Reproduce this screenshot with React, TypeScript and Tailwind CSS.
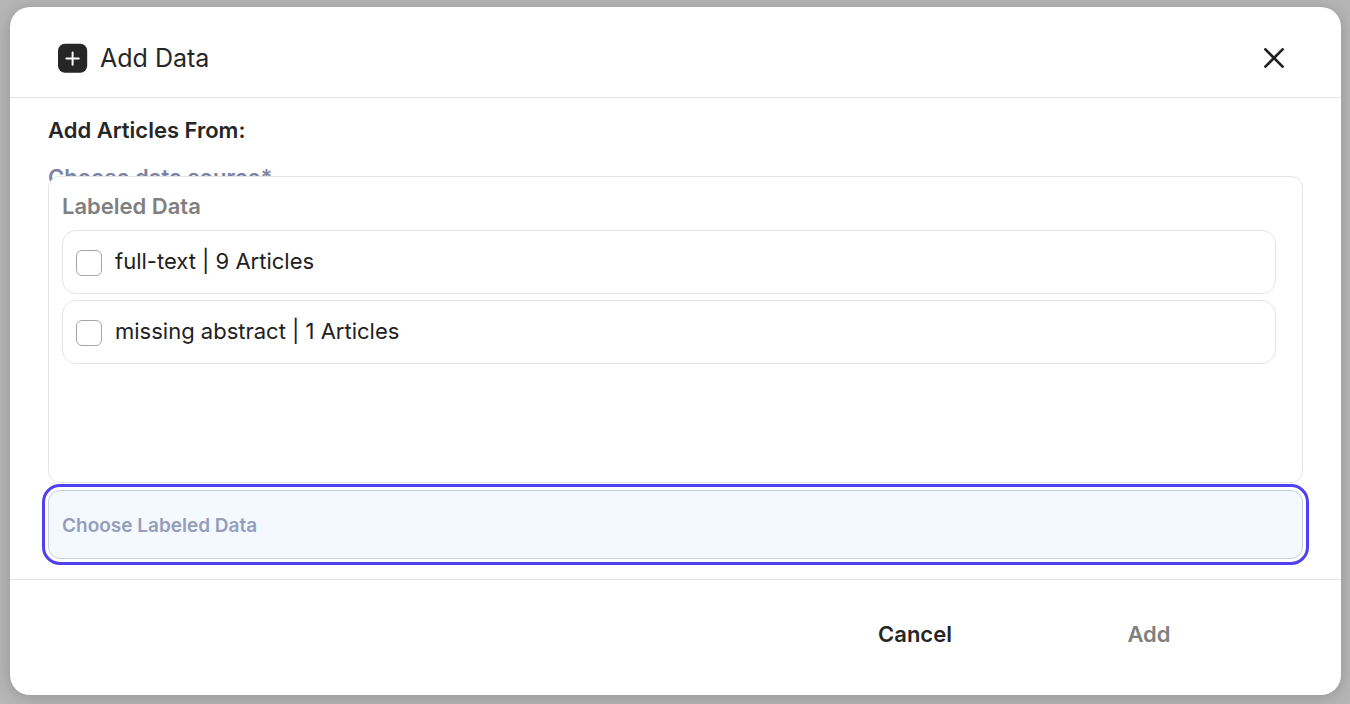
import { useState } from "react";

const sets = [
  { id: "full-text", label: "full-text | 9 Articles" },
  { id: "missing-abstract", label: "missing abstract | 1 Articles" },
];

function PlusBadge() {
  return (
    <svg width="30" height="30" viewBox="0 0 30 30" aria-hidden="true">
      <rect x="0" y="0.8" width="29.2" height="29" rx="7" fill="#262626" />
      <path d="M14.6 9.4v12.4M8.4 15.6h12.4" stroke="#fff" strokeWidth="2" strokeLinecap="round" />
    </svg>
  );
}

function CloseIcon() {
  return (
    <svg width="20" height="20" viewBox="0 0 20 20" aria-hidden="true">
      <path d="M1.4 1.4l17.2 17.2M18.6 1.4L1.4 18.6" stroke="#212121" strokeWidth="2.7" strokeLinecap="round" />
    </svg>
  );
}

function LabeledDataMenu() {
  const [picked, setPicked] = useState<string[]>([]);
  const toggle = (id: string) =>
    setPicked((p) => (p.includes(id) ? p.filter((x) => x !== id) : [...p, id]));

  return (
    <div className="absolute inset-x-0 bottom-full mb-[7px] h-[307px] rounded-xl border border-[#e5e5e5] bg-white py-3.5 pr-[26px] pl-[13px]">
      <h3 className="text-[22px] leading-[30px] font-semibold text-[#808080]">Labeled Data</h3>
      <ul className="mt-[9px] flex flex-col gap-1.5">
        {sets.map((s) => (
          <li key={s.id}>
            <label
              htmlFor={s.id}
              className="flex h-16 items-start gap-[13px] rounded-[14px] border border-[#e5e5e5] px-[13px] pt-[15px] text-[22px] text-[#212121]"
            >
              <input
                id={s.id}
                type="checkbox"
                checked={picked.includes(s.id)}
                onChange={() => toggle(s.id)}
                className="mt-1 size-[26px] shrink-0 appearance-none rounded-md border border-[#a6a6a6] bg-white outline-none checked:bg-[#4f3ff0]"
              />
              <span className="leading-[30px]">{s.label}</span>
            </label>
          </li>
        ))}
      </ul>
    </div>
  );
}

export default function App() {
  return (
    <main className="flex min-h-screen bg-[#b6b6b6] pt-[7px] pr-[9px] pb-[9px] pl-2.5 font-['Inter','Liberation_Sans',sans-serif] text-[#262626]">
      <section
        role="dialog"
        aria-labelledby="dialog-title"
        className="flex flex-1 flex-col rounded-[20px] bg-white shadow-[0_2px_16px_rgba(0,0,0,0.2)]"
      >
        <header className="flex items-center justify-between border-b border-[#e3e3e3] pt-[31px] pr-[57px] pb-[19px] pl-12">
          <div className="flex items-center gap-3">
            <PlusBadge />
            <h1 id="dialog-title" className="text-[25px] leading-10">Add Data</h1>
          </div>
          <button type="button" aria-label="Close">
            <CloseIcon />
          </button>
        </header>

        <div className="flex flex-1 flex-col px-[38px] pt-[17px] pb-5">
          <h2 className="text-[22px] leading-[30px] font-semibold">Add Articles From:</h2>
          <p className="mt-[17px] text-[22px] leading-[30px] font-semibold text-[#7a83a3]">Choose data source*</p>
          <div className="relative mt-auto pt-[280px]">
            <div className="relative">
              <LabeledDataMenu />
              <button
                type="button"
                aria-haspopup="true"
                aria-expanded="true"
                className="flex h-[69px] w-full items-center rounded-xl border border-[#c9cfdf] bg-[#f4f8ff] px-[13px] pt-1 text-left text-[19px] font-semibold text-[#949ebb] outline-3 outline-offset-3 outline-[#5140f2]"
              >
                Choose Labeled Data
              </button>
            </div>
          </div>
        </div>

        <footer className="flex justify-end gap-2.5 border-t border-[#e3e3e3] px-20 pt-[29px] pb-9 text-[22px] font-semibold">
          <button type="button" className="h-[50px] w-56">Cancel</button>
          <button type="button" disabled className="h-[50px] w-56 text-[#808080]">Add</button>
        </footer>
      </section>
    </main>
  );
}
